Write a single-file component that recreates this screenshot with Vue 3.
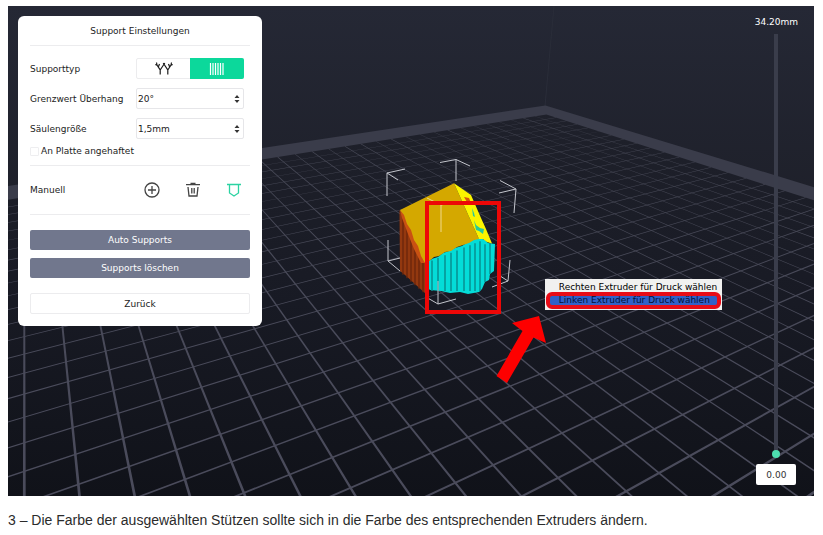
<script setup>
import { ref } from 'vue'

const supportType = ref('column')
const overhang = ref('20°')
const pillar = ref('1,5mm')
const attached = ref(false)
const layer = ref(0)
const menuOpen = ref(true)

// Build plate in one-point-per-axis perspective: both line families
// run to a vanishing point on the horizon.
const HORIZON = -53
const DEPTH = 548
const VA = 24.3
const VB = 1604
const aBase = (k) => VA + 55.1 * k
const bBase = (j) => 48.3 + 95.2 * j

function project(k, j) {
  const a = aBase(k)
  const b = bBase(j)
  const t = (VB - VA) / (a - VA - b + VB)
  return `${(VA + (a - VA) * t).toFixed(2)} ${(HORIZON + DEPTH * t).toFixed(2)}`
}

function quad(k0, j0, k1, j1) {
  return `M${project(k0, j0)}L${project(k1, j0)}L${project(k1, j1)}L${project(k0, j1)}Z`
}

const W = 0.025
const K_MIN = -2
const K_MAX = 31
const J_MIN = -20
const J_MAX = 9
let gridPath = ''
for (let k = K_MIN; k < K_MAX; k++) gridPath += quad(k - W, J_MIN, k + W, J_MAX)
let crossPath = ''
for (let j = J_MIN + 1; j <= J_MAX; j++) crossPath += quad(K_MIN, j - W, K_MAX, j + W)
const platePath = quad(K_MIN, J_MIN, K_MAX, J_MAX)
const rimPath = quad(K_MIN, -22.1, 32.7, J_MAX)

const ribs = [432, 438, 445, 451, 457, 464, 470, 475, 480, 485, 490]
const leftRibs = [403, 407, 411, 415, 419, 423]
</script>

<template>
  <main class="page">
    <section class="scene">
      <svg class="viewport" viewBox="8 6 806 490" aria-hidden="true">
        <defs>
          <linearGradient id="wall" x1="0" y1="6" x2="0" y2="200" gradientUnits="userSpaceOnUse">
            <stop offset="0" stop-color="#252835" />
            <stop offset="1" stop-color="#1e202a" />
          </linearGradient>
          <linearGradient id="floor" x1="0" y1="110" x2="0" y2="496" gradientUnits="userSpaceOnUse">
            <stop offset="0" stop-color="#1f212b" />
            <stop offset="0.5" stop-color="#181a24" />
            <stop offset="1" stop-color="#101219" />
          </linearGradient>
          <linearGradient id="lines" x1="0" y1="110" x2="0" y2="400" gradientUnits="userSpaceOnUse">
            <stop offset="0" stop-color="#454754" />
            <stop offset="1" stop-color="#4a4b5b" />
          </linearGradient>
        </defs>
        <rect x="8" y="6" width="806" height="490" fill="url(#wall)" />
        <path d="M545 106 554 6" stroke="#2a2d39" fill="none" />
        <path :d="rimPath" fill="#3a3c4a" />
        <path :d="platePath" fill="url(#floor)" />
        <path :d="gridPath" fill="url(#lines)" />
        <path :d="crossPath" fill="url(#lines)" />

        <g fill="none" stroke="#c3c5cc">
          <path d="M387 196V173L405 169M387 173 398 180" />
          <path d="M456 181V159.500L440 162.500M456 159.500 470 166" />
          <path d="M514 213 516 189 500 180.500M516 189 499 193" />
          <path d="M388 240V261L400 258M388 261 400 271" />
          <path d="M510 260 508 281 492 287M508 281 497 274" />
        </g>

        <path d="M399.500 210 400 271 405 275 426 294 426 262Z" fill="#93380f" />
        <g stroke="#6a260b" stroke-width="1.300">
          <line v-for="x in leftRibs" :key="x" :x1="x" :x2="x" :y1="212 + (x - 400) * 2.100" :y2="272 + (x - 400) * 0.880" />
        </g>
        <path d="M427 262 433 258.500 438 257 443 253 449 251 455 248 462 246 468 242 475 239 480 238 485 240 488 243 495 244 494 271 490 274 489 280 485 282 482 289 479 292 468 294 460 292 450 293 441 291 430 290 427 287Z" fill="#04dcd8" />
        <g stroke="#078f91" stroke-width="1.500">
          <line v-for="x in ribs" :key="x" :x1="x" :x2="x" :y1="262 - (x - 428) * 0.400 + (x > 480 ? 5 : 0)" :y2="x > 480 ? 290 - (x - 480) * 1.600 : 291" />
        </g>
        <path d="M400 210 454 183.300 479 239 474 240 469 243 463 245 457 247 451 251 445 252 439 256 434 257 428 262 423 263Z" fill="#d4a800" />
        <path d="M400 210 404 215 407 224 411 230 414 240 418 246 421 256 425 263 421 263 414 249 408 234 402 218Z" fill="#c95112" />
        <path d="M454 183.300 471 195 481 218 486 229 492 243.500 487 242 483 239 479 239Z" fill="#fbf500" />
        <path d="M464 197 469 198 471 203 467 202Z" fill="#d5570c" />
        <path d="M472 208 474 213 475 217 473 216ZM474 220 476 225 480 228 484 229 483 234 479 231 476 230Z" fill="#28c89c" />
        <path d="M441 232V205L456 202M441 205 427 198" fill="none" stroke="#f0d98a" />
        <path d="M438 281V304L456 299M438 304 426 297" fill="none" stroke="#c3c5cc" />

        <rect x="427" y="203" width="72" height="109" fill="none" stroke="#ed0707" stroke-width="4" />
        <path d="M539 316 512 323 522.500 331 496.500 376 507 383 533.500 337.500 546 343Z" fill="#fe0000" />
      </svg>

      <form class="panel" @submit.prevent>
        <h1 class="title">Support Einstellungen</h1>

        <div class="fields">
          <div class="row">
            <span id="type-label">Supporttyp</span>
            <div class="segment" role="group" aria-labelledby="type-label">
              <button type="button" class="seg" :class="{ on: supportType === 'tree' }" aria-label="Baum" @click="supportType = 'tree'">
                <svg width="18" height="13" viewBox="0 0 18 13" fill="none" stroke="currentColor" stroke-width="1.200">
                  <path d="M1.500 .5 2 3 5.200 8V12.500M5.200 8 9.800 1M12.800 12.500V8L8.200 1M12.800 8 16 3 16.500 .5M.3 2.500 2 3.200M17.700 2.500 16 3.200M3.300 5 4.500 2M14.700 5 13.500 2" />
                </svg>
              </button>
              <button type="button" class="seg" :class="{ on: supportType === 'column' }" aria-label="Säulen" @click="supportType = 'column'">
                <svg width="16" height="12" viewBox="0 0 16 12" stroke="currentColor" stroke-width="1.200">
                  <path d="M1.500 0V12M4 0V12M6.500 0V12M9 0V12M11.500 0V12M14 0V12" />
                </svg>
              </button>
            </div>
          </div>

          <div class="row">
            <label for="overhang">Grenzwert Überhang</label>
            <div class="select">
              <select id="overhang" v-model="overhang"><option>20°</option></select>
              <svg width="6" height="8" viewBox="0 0 6 8" fill="#333"><path d="M3 0 5.500 3H.5ZM3 8 5.500 5H.5Z" /></svg>
            </div>
          </div>

          <div class="row">
            <label for="pillar">Säulengröße</label>
            <div class="select">
              <select id="pillar" v-model="pillar"><option>1,5mm</option></select>
              <svg width="6" height="8" viewBox="0 0 6 8" fill="#333"><path d="M3 0 5.500 3H.5ZM3 8 5.500 5H.5Z" /></svg>
            </div>
          </div>
        </div>

        <label class="check"><input v-model="attached" type="checkbox" />An Platte angehaftet</label>

        <div class="manual">
          <span>Manuell</span>
          <div class="tools">
            <button type="button" class="tool" aria-label="Hinzufügen">
              <svg width="16" height="16" viewBox="0 0 16 16" fill="none" stroke="currentColor" stroke-width="1.300">
                <circle cx="8" cy="8" r="7" /><path d="M8 4V12M4 8H12" />
              </svg>
            </button>
            <button type="button" class="tool" aria-label="Entfernen">
              <svg width="16" height="16" viewBox="0 0 16 16" fill="none" stroke="currentColor" stroke-width="1.300">
                <path d="M1 2.700H15M5.500 1.500H10.500M3 5 4 14H12L13 5M6.800 6V11.500M9.200 6V11.500" />
              </svg>
            </button>
            <button type="button" class="tool active" aria-label="Bereich">
              <svg width="16" height="16" viewBox="0 0 16 16" fill="none" stroke="currentColor" stroke-width="1.300">
                <path d="M1 2.500H15M3.500 2.500V11L8 14 12.500 11V2.500" />
              </svg>
            </button>
          </div>
        </div>

        <div class="actions">
          <button type="button" class="btn solid">Auto Supports</button>
          <button type="button" class="btn solid">Supports löschen</button>
          <button type="button" class="btn back">Zurück</button>
        </div>
      </form>

      <div v-if="menuOpen" class="menu" role="menu">
        <button type="button" class="item" role="menuitem">Rechten Extruder für Druck wählen</button>
        <button type="button" class="item marked" role="menuitem">Linken Extruder für Druck wählen</button>
      </div>

      <div class="layers">
        <label for="layer">34.20mm</label>
        <input id="layer" v-model.number="layer" class="slider" type="range" min="0" max="34.2" step="0.1" />
        <output for="layer" class="value">{{ layer.toFixed(2) }}</output>
      </div>
    </section>

    <p class="caption">3 – Die Farbe der ausgewählten Stützen sollte sich in die Farbe des entsprechenden Extruders ändern.</p>
  </main>
</template>

<style>
body {
  margin: 0;
  background: #fff;
}
</style>

<style scoped>
.page {
  padding: 6px 9px 0 8px;
  font-family: "Liberation Sans", Arial, sans-serif;
}
.scene {
  position: relative;
  overflow: hidden;
  background: #181a24;
  font-family: "DejaVu Sans", sans-serif;
  font-size: 9px;
  line-height: 14px;
  color: #1c1c1c;
}
.viewport {
  display: block;
  width: 100%;
}
button,
select {
  font: inherit;
  color: inherit;
  margin: 0;
  padding: 0;
  border: 0;
  background: none;
}
.panel {
  position: absolute;
  top: 10px;
  left: 10px;
  box-sizing: border-box;
  width: 244px;
  padding: 0 12px 12px;
  background: #fff;
  border-radius: 6px;
}
.title {
  margin: 0;
  padding: 8px 0 7px;
  border-bottom: 1px solid #ececee;
  font-size: 9px;
  line-height: 14px;
  font-weight: 400;
  text-align: center;
}
.fields {
  display: grid;
  gap: 9px;
  padding: 12px 6px 0 0;
}
.row {
  display: grid;
  grid-template-columns: 106px 1fr;
  align-items: center;
  white-space: nowrap;
}
.segment {
  display: flex;
  box-sizing: border-box;
  height: 21px;
  border: 1px solid #ececee;
  border-radius: 2px;
}
.seg {
  display: grid;
  place-items: center;
  flex: 1;
}
.seg.on {
  margin: -1px;
  background: #0cd89b;
  color: #fff;
  border-radius: 0 2px 2px 0;
}
.select {
  display: grid;
  align-items: center;
}
.select > * {
  grid-area: 1 / 1;
}
.select svg {
  justify-self: end;
  margin-right: 4px;
  pointer-events: none;
}
select {
  appearance: none;
  box-sizing: border-box;
  width: 100%;
  height: 21px;
  padding: 0 2px 0 1px;
  border: 1px solid #e6e6e9;
  border-radius: 2px;
}
.check {
  display: flex;
  align-items: center;
  gap: 2px;
  height: 10px;
  padding: 7px 0 9px;
  border-bottom: 1px solid #ececee;
}
.check input {
  appearance: none;
  box-sizing: border-box;
  width: 9px;
  height: 9px;
  margin: 0;
  border: 1px solid #eeeef0;
  border-radius: 1px;
}
.manual {
  display: flex;
  align-items: center;
  justify-content: space-between;
  height: 48px;
  padding-right: 4px;
  border-bottom: 1px solid #ececee;
}
.tools {
  display: flex;
  gap: 17px;
}
.tool {
  display: grid;
  place-items: center;
  width: 24px;
  height: 24px;
  color: #444;
}
.tool.active {
  color: #2bd3a2;
}
.actions {
  display: grid;
  gap: 8px;
  padding-top: 15px;
}
.btn {
  height: 20px;
  border-radius: 2px;
}
.solid {
  background: #71778d;
  color: #fff;
}
.back {
  height: 21px;
  margin-top: 7px;
  border: 1px solid #ececee;
}
.menu {
  position: absolute;
  left: 66.600%;
  top: 55.800%;
  display: grid;
  padding: 1px;
  background: #f1f1f0;
  color: #000;
}
.item {
  padding: 0 4px 0 13px;
  height: 12px;
  line-height: 14px;
  text-align: left;
  white-space: nowrap;
}
.item.marked {
  height: 17px;
  padding: 0 4px 0 9px;
  border: 4px solid #e80c17;
  border-radius: 6px;
  background: #3161c8;
  line-height: 9px;
  color: #050f33;
}
.layers {
  position: absolute;
  top: 9px;
  right: 16px;
  bottom: 11px;
  display: flex;
  flex-direction: column;
  align-items: center;
  color: #fff;
}
.slider {
  appearance: none;
  writing-mode: vertical-lr;
  direction: rtl;
  flex: 1;
  min-height: 0;
  width: 8px;
  margin: 5px 0 6px;
  background: linear-gradient(#3a3d4b, #3a3d4b) center / 4px 100% no-repeat;
}
.slider::-webkit-slider-thumb {
  appearance: none;
  width: 8px;
  height: 8px;
  border-radius: 50%;
  background: #4ddfb0;
}
.value {
  display: grid;
  place-items: center;
  width: 40px;
  height: 21px;
  border-radius: 2px;
  background: #fff;
  color: #333;
}
.caption {
  margin: 0;
  padding: 15px 0;
  font-size: 14px;
  line-height: 18px;
  color: #2b2b2b;
}
</style>
